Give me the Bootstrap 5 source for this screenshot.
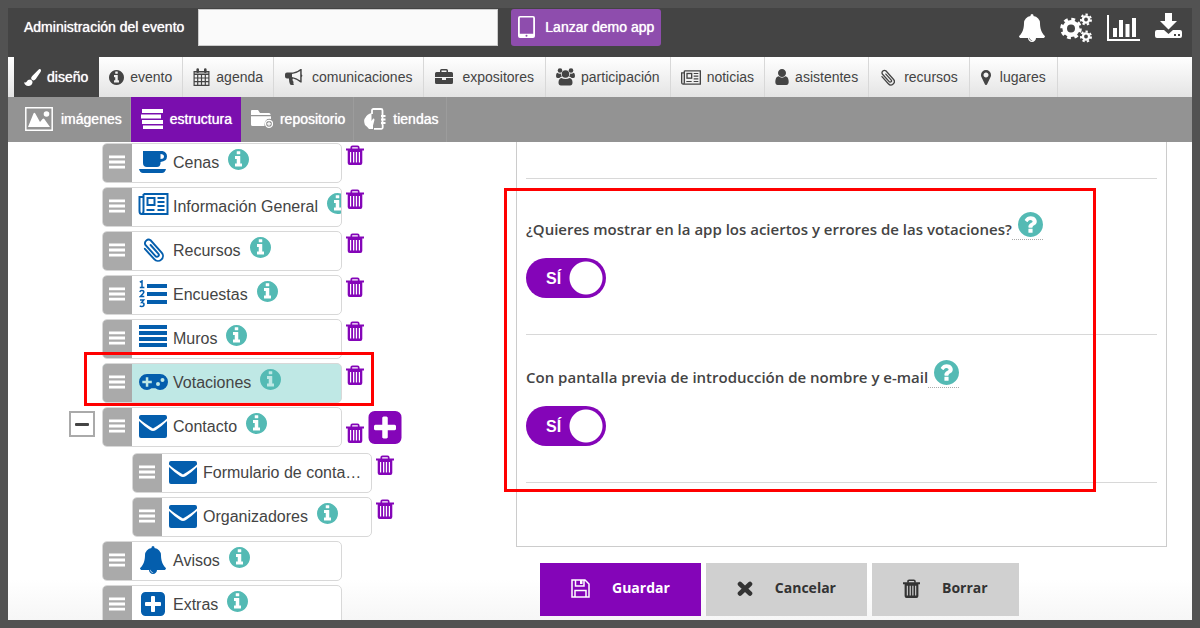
<!DOCTYPE html>
<html lang="es">
<head>
<meta charset="utf-8">
<meta name="viewport" content="width=device-width, initial-scale=1">
<title>Administración del evento</title>
<link href="https://cdn.jsdelivr.net/npm/bootstrap@5.3.0/dist/css/bootstrap.min.css" rel="stylesheet">
<style>
  :root { --dark: #444; --purple: #8405b8; --teal: #54bab4; --blue: #045ead; --grip: #aaa; }
  body { background: #525252; font-family: "Liberation Sans", Arial, sans-serif; font-size: 14px; line-height: 20px; color: var(--dark); }
  svg { display: block; flex: none; }
  a { color: inherit; text-decoration: none; }
  .app-shell { height: 100vh; padding: 8px; }
  .soft-bold { text-shadow: 0 0 1px currentColor; }

  .top-bar { background: var(--dark); color: #fff; height: 49px; padding: 1px 10px 0 16px; }
  .event-name { width: 300px; height: 37px; border: 1px solid #ccc; border-radius: 0; background: #fafafa; margin: 0 13px 0 14px; }
  .btn-demo { background: #8e4dad; color: #fff; height: 37px; border-radius: 3px; padding: 0 7px 2px; gap: 10px; font-size: 14px; line-height: 20px; border: 0; }
  .btn-demo:hover { background: #7c3e9a; color: #fff; }
  .top-tools { gap: 15px; }

  .main-tabs { height: 40px; padding-left: 6px; background: linear-gradient(#fff, #e4e4e4); }
  .main-tabs a { height: 40px; padding: 0 10px; gap: 6px; border-right: 1px solid #d8d8d8; }
  .main-tabs a.active { background: var(--dark); color: #fff; border-color: var(--dark); }
  .main-tabs .roomy { gap: 9px; padding: 0 11px; }

  .sub-tabs { height: 45px; padding-left: 6px; background: #939393; color: #fff; }
  .sub-tabs a { height: 45px; padding: 0 8px 2px 10px; gap: 7px; border-right: 1px solid #9c9c9c; }
  .sub-tabs a.active { background: #7a0eae; border-color: #7a0eae; }

  .workspace { background: linear-gradient(#fff, #fff calc(100% - 40px), #f6f6f6); }
  .structure { flex: 0 0 508px; padding: 1px 0 0 61px; }
  .entry { gap: 4px; margin-bottom: 4px; }
  .entry.parent { margin-bottom: 6px; }
  .fold-col { width: 29px; padding-top: 4px; }
  .child .fold-col { width: 59px; }
  .btn-fold { width: 26px; height: 26px; border: 2px solid var(--grip); background: #fff; padding: 0; color: #444; }
  .entry-box { width: 240px; height: 40px; border: 1px solid #d8d8d8; border-radius: 5px; background: #fff; font-size: 16px; }
  .entry-box.selected { background: #bfe8e5; }
  .grip { width: 29px; padding: 0 1px 2px 0; background: var(--grip); color: #fff; }
  .entry-icon { width: 28px; margin: 0 6px 2px 7px; color: var(--blue); }
  .entry-info { color: var(--teal); margin: 0 0 7px 9px; }
  .btn-flat { border: 0; background: none; padding: 0; color: var(--purple); }
  .entry > .btn-trash { margin-top: 2px; }
  .parent > .btn-trash { margin-top: 16px; }
  .parent > .btn-add { margin-top: 4px; }
  .callout-frame { position: absolute; border: 3px solid #f00; pointer-events: none; }
  .entry .callout-frame { left: 15px; top: -11px; width: 290px; height: 54px; }

  .editor { padding-right: 25px; font-family: "Open Sans", "Noto Sans", sans-serif; }
  .option-panel { border: 1px solid #ccc; border-top: 0; padding: 0 9px 63px; }
  .panel-head { height: 37px; border-bottom: 1px solid #d8d8d8; }
  .option { border-bottom: 1px solid #d8d8d8; padding: 25px 0 36px; }
  .option.first { padding-top: 33px; }
  .option-label { font-size: 15px; font-weight: 600; line-height: 20px; padding-top: 7px; }
  .option-help { border-bottom: 1px dotted #aaa; color: var(--teal); padding: 0 0 1px 6px; }
  .option-title { height: 28px; margin-bottom: 18px; }
  .switch-wrap { position: relative; width: 80px; height: 40px; }
  .switch-wrap input { appearance: none; width: 80px; height: 40px; margin: 0; display: block; border-radius: 20px; background: radial-gradient(circle at 20px 20px, #fff 16px, #aaa 17px); }
  .switch-wrap input:checked { background: radial-gradient(circle at 60px 20px, #fff 16px, var(--purple) 17px); }
  .switch-wrap span { position: absolute; left: 20px; top: 11px; color: #fff; font: bold 16px/20px "Liberation Sans", Arial, sans-serif; pointer-events: none; }
  .editor .callout-frame { left: -22px; right: 61px; top: 9px; bottom: -9px; }
  .form-actions { gap: 5px; padding: 16px 0 0 24px; }
  .btn-action { height: 53px; padding: 0 31px 3px; gap: 22px; border: 0; background: #d0d0d0; color: #333; font-weight: 700; font-size: 14px; }
  .btn-action.save { background: var(--purple); color: #fff; }
</style>
</head>
<body>
<svg width="0" height="0" class="position-absolute" aria-hidden="true">
  <symbol id="info" viewBox="128 128 1536 1536"><path fill="currentColor" d="M1152 1376v-160q0-14-9-23t-23-9h-96v-512q0-14-9-23t-23-9h-320q-14 0-23 9t-9 23v160q0 14 9 23t23 9h96v320h-96q-14 0-23 9t-9 23v160q0 14 9 23t23 9h448q14 0 23-9t9-23zm-128-896v-160q0-14-9-23t-23-9h-192q-14 0-23 9t-9 23v160q0 14 9 23t23 9h192q14 0 23-9t9-23zm640 416q0 209-103 385.500t-279.500 279.500-385.500 103-385.500-103-279.500-279.500-103-385.500 103-385.500 279.500-279.500 385.500-103 385.500 103 279.500 279.500 103 385.500z"/></symbol>
  <symbol id="help" viewBox="128 128 1536 1536"><path fill="currentColor" d="M1024 1376v-192q0-14-9-23t-23-9h-192q-14 0-23 9t-9 23v192q0 14 9 23t23 9h192q14 0 23-9t9-23zm256-672q0-88-55.500-163t-138.500-116-170-41q-243 0-371 213-15 24 8 42l132 100q7 6 19 6 16 0 25-12 53-68 86-92 34-24 86-24 48 0 85.500 26t37.500 59q0 38-20 61t-68 45q-63 28-115.500 86.500t-52.500 125.500v36q0 14 9 23t23 9h192q14 0 23-9t9-23q0-19 21.500-49.500t54.500-49.500q32-18 49-28.500t46-35 44.500-48 28-60.500 12.500-81zm384 192q0 209-103 385.500t-279.500 279.500-385.500 103-385.500-103-279.500-279.500-103-385.500 103-385.500 279.500-279.500 385.500-103 385.500 103 279.500 279.500 103 385.500z"/></symbol>
  <symbol id="bell" viewBox="64 0 1664 1792"><path fill="currentColor" d="M912 1696q0-16-16-16-59 0-101.500-42.500t-42.500-101.500q0-16-16-16t-16 16q0 73 51.500 124.500t124.500 51.500q16 0 16-16zm816-288q0 52-38 90t-90 38h-448q0 106-75 181t-181 75-181-75-75-181h-448q-52 0-90-38t-38-90q50-42 91-88t85-119.500 74.500-158.500 50-206 19.500-260q0-152 117-282.500t307-158.500q-8-19-8-39 0-40 28-68t68-28 68 28 28 68q0 20-8 39 190 28 307 158.500t117 282.500q0 139 19.500 260t50 206 74.500 158.500 85 119.500 91 88z"/></symbol>
  <symbol id="user" viewBox="256 128 1280 1536"><path fill="currentColor" d="M1536 1399q0 109-62.500 187t-150.500 78h-854q-88 0-150.500-78t-62.500-187q0-85 8.500-160.500t31.500-152 58.500-131 94-89 134.500-34.500q131 128 313 128t313-128q76 0 134.500 34.500t94 89 58.500 131 31.500 152 8.500 160.500zm-256-887q0 159-112.500 271.500t-271.500 112.500-271.500-112.500-112.500-271.500 112.500-271.500 271.500-112.500 271.500 112.500 112.500 271.500z"/></symbol>
  <symbol id="pin" viewBox="384 128 1024 1536"><path fill="currentColor" d="M1152 640q0-106-75-181t-181-75-181 75-75 181 75 181 181 75 181-75 75-181zm256 0q0 109-33 179l-364 774q-16 33-47.500 52t-67.500 19-67.500-19-46.500-52l-365-774q-33-70-33-179 0-212 150-362t362-150 362 150 150 362z"/></symbol>
  <symbol id="plus" viewBox="128 128 1536 1536"><path fill="currentColor" d="M1408 960v-128q0-26-19-45t-45-19h-320v-320q0-26-19-45t-45-19h-128q-26 0-45 19t-19 45v320h-320q-26 0-45 19t-19 45v128q0 26 19 45t45 19h320v320q0 26 19 45t45 19h128q26 0 45-19t19-45v-320h320q26 0 45-19t19-45zm256-544v960q0 119-84.500 203.500t-203.500 84.500h-960q-119 0-203.500-84.500t-84.500-203.500v-960q0-119 84.500-203.500t203.500-84.500h960q119 0 203.500 84.500t84.500 203.500z"/></symbol>
  <symbol id="trash" viewBox="0 0 18 20"><path fill="none" stroke="currentColor" stroke-width="1.700" d="M5.300 4V2.500q0-1.200 1.200-1.200h5q1.200 0 1.200 1.200V4"/><path fill="currentColor" fill-rule="evenodd" d="M0 3.500h18v2h-1.700V18q0 2-2 2H3.700q-2 0-2-2V5.500H0zM4 7v10.500h1.200V7zM7 7v10.500h1.300V7zM9.800 7v10.500h1.300V7zM12.800 7v10.500H14V7z"/></symbol>
  <symbol id="bars" viewBox="0 0 17 14"><path fill="currentColor" d="M0 0h17v3H0zM0 5.500h17v3H0zM0 11h17v3H0z"/></symbol>
  <symbol id="news" viewBox="0 0 30 22"><g fill="none" stroke="currentColor"><path stroke-width="2" d="M5 1h24v20H4M5 1v17q0 3-2 3-2 0-2-3V4h4"/><rect x="9" y="5" width="7" height="7" stroke-width="2"/><path stroke-width="1.800" d="M19 5h7M19 9h7M19 13h7M8 17h8M19 17h7"/></g></symbol>
  <symbol id="clip" viewBox="0 0 22 24"><path fill="none" stroke="currentColor" stroke-width="1.900" stroke-linecap="round" transform="rotate(-42 12 12) translate(-1 0)" d="M7 5V19a5 5 0 0010 0V2.500a3.600 3.500 0 00-7 0V17.500a1.900 2 0 003.800 0V6"/></symbol>
  <symbol id="mail" viewBox="0 0 28 23"><path fill="currentColor" d="M2 0h24q2 0 2 2v1.500Q24 7.500 14 13.500 4 7.500 0 3.500V2Q0 0 2 0zM0 6q5 5 11 9 3 1.800 6 0 6-4 11-9v15q0 2-2 2H2q-2 0-2-2z"/></symbol>
</svg>

<div class="app-shell d-flex flex-column">
  <header class="top-bar d-flex align-items-start flex-shrink-0">
    <label class="soft-bold text-nowrap pt-2 mt-0" for="eventName">Administración del evento</label>
    <input class="event-name form-control" id="eventName" type="text">
    <button class="btn btn-demo d-flex align-items-center text-nowrap" type="button">
      <svg width="17" height="22" viewBox="0 0 17 22"><path fill="currentColor" fill-rule="evenodd" d="M2 0h13q2 0 2 2v18q0 2-2 2H2q-2 0-2-2V2Q0 0 2 0zm-.2 2v15.800h13.400V2q0-.5-.5-.5H2.300q-.5 0-.5.500zM8.500 18.800a1 1 0 100 2 1 1 0 000-2z"/></svg>
      <span class="soft-bold">Lanzar demo app</span>
    </button>
    <nav class="top-tools d-flex align-items-center ms-auto pt-1" aria-label="Herramientas">
      <a href="#" aria-label="Avisos"><svg width="26" height="30"><use href="#bell"/></svg></a>
      <a href="#" aria-label="Ajustes"><svg width="32" height="30" viewBox="0 0 32 30"><g fill="none" stroke="currentColor"><circle cx="11" cy="15.500" r="6.300" stroke-width="4.600"/><circle cx="11" cy="15.500" r="9.300" stroke-width="3" stroke-dasharray="3.800 3.504"/><circle cx="26" cy="6.500" r="3.100" stroke-width="2.400"/><circle cx="26" cy="6.500" r="5" stroke-width="2" stroke-dasharray="2.300 2.188"/><circle cx="26" cy="23.500" r="3.100" stroke-width="2.400"/><circle cx="26" cy="23.500" r="5" stroke-width="2" stroke-dasharray="2.300 2.188"/></g></svg></a>
      <a href="#" aria-label="Estadísticas"><svg width="33" height="26" viewBox="0 0 33 26"><path fill="currentColor" d="M0 0h2v24h31v2H0zM6 13h4v9H6zM12 5h4v17h-4zM18.500 9h4v13h-4zM25 3h4v19h-4z"/></svg></a>
      <a href="#" class="pb-1" aria-label="Descargar"><svg width="27" height="26" viewBox="0 0 27 26"><path fill="currentColor" fill-rule="evenodd" d="M10 0h7v8h5l-8.500 8.500L5 8h5zM2 17h7l4.500 4 4.500-4h7q2 0 2 2v4q0 2-2 2H2q-2 0-2-2v-4q0-2 2-2zm17 4v2h2v-2zm4 0v2h2v-2z"/></svg></a>
    </nav>
  </header>

  <nav class="main-tabs d-flex flex-shrink-0 text-nowrap" aria-label="Secciones">
    <a href="#" class="active d-flex align-items-center soft-bold" aria-current="page"><svg width="17" height="17" viewBox="0 0 17 17"><path fill="currentColor" d="M16.500.3q1 .8 0 2.700l-4.700 7q-1.500 1.900-3 1.300-2-1-1.600-2.600.2-.9 1.500-2.300l5.500-5.500q1.300-1.300 2.300-.6zM6.300 10.500q2 .7 2.300 2.500-.5 3.800-4.300 4-3.300 0-4.300-3.800 1.700 1 2.600-.4.900-2.300 3.700-2.300z"/></svg>diseño</a>
    <a href="#" class="d-flex align-items-center"><svg width="15" height="15"><use href="#info"/></svg>evento</a>
    <a href="#" class="d-flex align-items-center"><svg width="17" height="18" viewBox="0 0 16 18"><path fill="none" stroke="currentColor" stroke-width="1.200" d="M.6 3.500h14.800v13.900H.6zM.6 6.500h14.800M.6 10h14.800M.6 13.700h14.800M4.200 6.500v11M8 6.500v11M11.800 6.500v11M.6 5h14.800"/><path stroke="currentColor" stroke-width="2.600" stroke-linecap="round" d="M4.200 1.600v2.200M11.800 1.600v2.200"/></svg>agenda</a>
    <a href="#" class="roomy d-flex align-items-center"><svg width="18" height="16" viewBox="0 0 18 16"><path fill="currentColor" fill-rule="evenodd" d="M2 3.500h6q4-.5 7.500-3.500h1.200v5.500q1.300.7 0 2.500v5.500h-1.200Q12 10.500 8 9.500q-1.200 1.500.6 3.500-.6 1.800.5 2.800-2 .6-4-.2Q3.800 12 4 9.500H2Q0 9.500 0 7.500v-2q0-2 2-2zm5 1.600V8q4.500.5 8.200 3.500V2Q11.500 4.500 7 5.100z"/></svg>comunicaciones</a>
    <a href="#" class="roomy d-flex align-items-center"><svg width="18" height="16" viewBox="0 0 18 16"><path fill="currentColor" fill-rule="evenodd" d="M5 3V1.500Q5 0 6.500 0h5Q13 0 13 1.500V3h3.500Q18 3 18 4.500V8H0V4.500Q0 3 1.500 3zm1.500 0h5V1.500h-5zM0 9h7v2h4V9h7v4.500q0 1.500-1.500 1.500h-15Q0 15 0 13.500z"/></svg>expositores</a>
    <a href="#" class="d-flex align-items-center"><svg width="19" height="18" viewBox="0 0 19 18"><g fill="currentColor"><circle cx="9.500" cy="6" r="3.800"/><circle cx="4" cy="2.500" r="2.300"/><circle cx="15" cy="2.500" r="2.300"/><path d="M5.500 10Q7 11 9.500 11T13.500 10q3 .5 3 4.500 0 3-2.500 3H5q-2.500 0-2.500-3 0-4 3-4.500zM1.300 4.800q1.700 1.200 3.400.8.200 2 1.300 3-1.500.2-2.700 1.400H1.500Q0 10 0 8q0-3 1.300-3.200zM17.700 4.800q-1.700 1.200-3.400.8-.2 2-1.300 3 1.500.2 2.700 1.400h1.800Q19 10 19 8q0-3-1.300-3.200z"/></g></svg>participación</a>
    <a href="#" class="d-flex align-items-center"><svg width="20" height="15"><use href="#news"/></svg>noticias</a>
    <a href="#" class="d-flex align-items-center"><svg width="14" height="16"><use href="#user"/></svg>asistentes</a>
    <a href="#" class="roomy d-flex align-items-center"><svg width="15" height="17"><use href="#clip"/></svg>recursos</a>
    <a href="#" class="roomy d-flex align-items-center"><svg width="10" height="15"><use href="#pin"/></svg>lugares</a>
  </nav>

  <nav class="sub-tabs d-flex flex-shrink-0 text-nowrap soft-bold" aria-label="Diseño">
    <a href="#" class="d-flex align-items-center"><svg width="30" height="24" viewBox="0 0 30 24"><path fill="none" stroke="currentColor" stroke-width="1.500" d="M1.800.8h26.400v22.400H1.800z"/><path fill="currentColor" d="M4 20 9.500 6.500q.8-1.300 1.800 0L16 15l2.500-3q1-1 1.800 0L26 20z"/><circle cx="22.500" cy="7" r="2.800" fill="currentColor"/></svg>imágenes</a>
    <a href="#" class="active d-flex align-items-center" aria-current="page"><svg width="22" height="20" viewBox="0 0 22 20"><path fill="currentColor" d="M1 0h21v4H1zM0 5.500h20v4H0zM1 11h21v4H1zM2 16.500h20V20H2z"/></svg>estructura</a>
    <a href="#" class="d-flex align-items-center"><svg width="22" height="18" viewBox="0 0 22 18"><path fill="currentColor" d="M1 0h6l2 3h9q1.500 0 1.500 1.500V5H0V1Q0 0 1 0zM0 6.300h20V9q-6-1-6.500 5.500V16H1.500Q0 16 0 14.500z"/><circle cx="18" cy="13.800" r="3.500" fill="none" stroke="currentColor" stroke-width="1.300"/><path stroke="currentColor" stroke-width="1.200" d="M16 13.800h4M18 11.800v4"/></svg>repositorio</a>
    <a href="#" class="d-flex align-items-center"><svg width="22" height="22" viewBox="0 0 22 22"><path fill="none" stroke="currentColor" stroke-width="1.800" d="M8 6V2.500Q8 1 9.500 1H17q1.500 0 1.500 1.500V17M10 20.800h7.500q1.200 0 1.200-1.200V17"/><path fill="currentColor" d="M7.500 5v8l1.700-2.500q1.500 0 1.200 1.800L9 17.500V21H5Q3 18.500 1 17-1 11.500 1.500 9.500 3 6 7.500 5zM17 7h4.500v2H17zM17 10.500h4.500v2H17zM17 14h4.500v2H17z"/></svg>tiendas</a>
  </nav>

  <main class="workspace d-flex flex-fill overflow-hidden">
    <section class="structure" aria-label="Estructura">
      <div class="entry d-flex align-items-start"><div class="fold-col"></div>
        <div class="entry-box d-flex overflow-hidden"><span class="grip d-flex align-items-center justify-content-center"><svg width="16" height="14"><use href="#bars"/></svg></span><span class="d-flex align-items-center flex-fill text-nowrap"><span class="entry-icon d-flex justify-content-center"><svg width="28" height="22" viewBox="0 0 28 22"><path fill="currentColor" fill-rule="evenodd" d="M4 0h19.500q4.500 1 4.500 5.500T21.500 11v1.500Q21 16 18 16H8q-4 0-4-4zm17.500 3v5q3.500 0 3.500-2.500T21.500 3zM0 18h27q-1 4-4 4H4q-3 0-4-4z"/></svg></span>Cenas<svg class="entry-info" width="21" height="21"><use href="#info"/></svg></span></div>
        <button class="btn-flat btn-trash" type="button" aria-label="Borrar Cenas"><svg width="18" height="20"><use href="#trash"/></svg></button></div>

      <div class="entry d-flex align-items-start"><div class="fold-col"></div>
        <div class="entry-box d-flex overflow-hidden"><span class="grip d-flex align-items-center justify-content-center flex-shrink-0"><svg width="16" height="14"><use href="#bars"/></svg></span><span class="d-flex align-items-center flex-fill text-nowrap"><span class="entry-icon d-flex justify-content-center flex-shrink-0 pb-1"><svg width="31" height="22"><use href="#news"/></svg></span>Información General<svg class="entry-info" width="21" height="21"><use href="#info"/></svg></span></div>
        <button class="btn-flat btn-trash" type="button" aria-label="Borrar Información General"><svg width="18" height="20"><use href="#trash"/></svg></button></div>

      <div class="entry d-flex align-items-start"><div class="fold-col"></div>
        <div class="entry-box d-flex overflow-hidden"><span class="grip d-flex align-items-center justify-content-center"><svg width="16" height="14"><use href="#bars"/></svg></span><span class="d-flex align-items-center flex-fill text-nowrap"><span class="entry-icon d-flex justify-content-center"><svg width="22" height="24"><use href="#clip"/></svg></span>Recursos<svg class="entry-info" width="21" height="21"><use href="#info"/></svg></span></div>
        <button class="btn-flat btn-trash" type="button" aria-label="Borrar Recursos"><svg width="18" height="20"><use href="#trash"/></svg></button></div>

      <div class="entry d-flex align-items-start"><div class="fold-col"></div>
        <div class="entry-box d-flex overflow-hidden"><span class="grip d-flex align-items-center justify-content-center"><svg width="16" height="14"><use href="#bars"/></svg></span><span class="d-flex align-items-center flex-fill text-nowrap"><span class="entry-icon d-flex justify-content-center"><svg width="28" height="28" viewBox="0 0 28 28"><path fill="currentColor" d="M8 4h20v4H8zM8 12h20v4H8zM8 20h20v4H8z"/><path fill="none" stroke="currentColor" stroke-width="1.500" d="M.8 2.200 3 1v7M.8 7.500h4.600M.8 12q.5-1.500 2-1.500 2 0 2 1.500 0 1.200-3.500 4.500h4M1 20h3.700l-2 2.500q2.300 0 2.300 2T2.800 26.500q-1.300 0-2-.8"/></svg></span>Encuestas<svg class="entry-info" width="21" height="21"><use href="#info"/></svg></span></div>
        <button class="btn-flat btn-trash" type="button" aria-label="Borrar Encuestas"><svg width="18" height="20"><use href="#trash"/></svg></button></div>

      <div class="entry d-flex align-items-start"><div class="fold-col"></div>
        <div class="entry-box d-flex overflow-hidden"><span class="grip d-flex align-items-center justify-content-center"><svg width="16" height="14"><use href="#bars"/></svg></span><span class="d-flex align-items-center flex-fill text-nowrap"><span class="entry-icon d-flex justify-content-center pb-1"><svg width="28" height="22" viewBox="0 0 28 22"><path fill="currentColor" d="M0 0h28v4H0zM0 6h28v4H0zM0 12h28v4H0zM0 18h28v4H0z"/></svg></span>Muros<svg class="entry-info" width="21" height="21"><use href="#info"/></svg></span></div>
        <button class="btn-flat btn-trash" type="button" aria-label="Borrar Muros"><svg width="18" height="20"><use href="#trash"/></svg></button></div>

      <div class="entry d-flex align-items-start position-relative"><div class="fold-col"></div>
        <div class="entry-box selected d-flex overflow-hidden"><span class="grip d-flex align-items-center justify-content-center"><svg width="16" height="14"><use href="#bars"/></svg></span><span class="d-flex align-items-center flex-fill text-nowrap"><span class="entry-icon d-flex justify-content-center"><svg width="29" height="16" viewBox="0 0 29 16"><path fill="currentColor" fill-rule="evenodd" d="M8 0h13a8 8 0 010 16q-2.500 0-4.500-1.800h-4Q10.500 16 8 16A8 8 0 018 0zM6.800 3.300v3.500H3.300v2.500h3.500v3.500h2.500V9.300h3.500V6.800H9.300V3.300zM19 8a2 2 0 100 4 2 2 0 000-4zm4.500-4a2 2 0 100 4 2 2 0 000-4z"/></svg></span>Votaciones<svg class="entry-info" width="21" height="21"><use href="#info"/></svg></span></div>
        <button class="btn-flat btn-trash" type="button" aria-label="Borrar Votaciones"><svg width="18" height="20"><use href="#trash"/></svg></button>
        <div class="callout-frame"></div></div>

      <div class="entry parent d-flex align-items-start"><div class="fold-col"><button class="btn-fold d-flex align-items-center justify-content-center" type="button" aria-label="Plegar Contacto"><svg width="14" height="3" viewBox="0 0 14 3"><rect width="14" height="3" rx="1" fill="currentColor"/></svg></button></div>
        <div class="entry-box d-flex overflow-hidden"><span class="grip d-flex align-items-center justify-content-center"><svg width="16" height="14"><use href="#bars"/></svg></span><span class="d-flex align-items-center flex-fill text-nowrap"><span class="entry-icon d-flex justify-content-center"><svg width="28" height="23"><use href="#mail"/></svg></span>Contacto<svg class="entry-info" width="21" height="21"><use href="#info"/></svg></span></div>
        <button class="btn-flat btn-trash" type="button" aria-label="Borrar Contacto"><svg width="18" height="20"><use href="#trash"/></svg></button>
        <button class="btn-flat btn-add" type="button" aria-label="Añadir"><svg width="34" height="33"><use href="#plus"/></svg></button></div>

      <div class="entry child d-flex align-items-start"><div class="fold-col"></div>
        <div class="entry-box d-flex overflow-hidden"><span class="grip d-flex align-items-center justify-content-center"><svg width="16" height="14"><use href="#bars"/></svg></span><span class="d-flex align-items-center flex-fill text-nowrap"><span class="entry-icon d-flex justify-content-center"><svg width="28" height="23"><use href="#mail"/></svg></span>Formulario de conta…</span></div>
        <button class="btn-flat btn-trash" type="button" aria-label="Borrar Formulario"><svg width="18" height="20"><use href="#trash"/></svg></button></div>

      <div class="entry child d-flex align-items-start"><div class="fold-col"></div>
        <div class="entry-box d-flex overflow-hidden"><span class="grip d-flex align-items-center justify-content-center"><svg width="16" height="14"><use href="#bars"/></svg></span><span class="d-flex align-items-center flex-fill text-nowrap"><span class="entry-icon d-flex justify-content-center"><svg width="28" height="23"><use href="#mail"/></svg></span>Organizadores<svg class="entry-info" width="21" height="21"><use href="#info"/></svg></span></div>
        <button class="btn-flat btn-trash" type="button" aria-label="Borrar Organizadores"><svg width="18" height="20"><use href="#trash"/></svg></button></div>

      <div class="entry d-flex align-items-start"><div class="fold-col"></div>
        <div class="entry-box d-flex overflow-hidden"><span class="grip d-flex align-items-center justify-content-center"><svg width="16" height="14"><use href="#bars"/></svg></span><span class="d-flex align-items-center flex-fill text-nowrap"><span class="entry-icon d-flex justify-content-center"><svg width="26" height="28"><use href="#bell"/></svg></span>Avisos<svg class="entry-info" width="21" height="21"><use href="#info"/></svg></span></div></div>

      <div class="entry d-flex align-items-start"><div class="fold-col"></div>
        <div class="entry-box d-flex overflow-hidden"><span class="grip d-flex align-items-center justify-content-center"><svg width="16" height="14"><use href="#bars"/></svg></span><span class="d-flex align-items-center flex-fill text-nowrap"><span class="entry-icon d-flex justify-content-center"><svg width="24" height="24"><use href="#plus"/></svg></span>Extras<svg class="entry-info" width="21" height="21"><use href="#info"/></svg></span></div></div>
    </section>

    <form class="editor flex-fill">
      <div class="option-panel">
        <div class="panel-head"></div>
        <div class="position-relative">
          <div class="option first">
            <div class="option-title d-flex">
              <label class="option-label text-nowrap" for="showHits">¿Quieres mostrar en la app los aciertos y errores de las votaciones?</label>
              <a href="#" class="option-help" aria-label="Ayuda"><svg width="25" height="25"><use href="#help"/></svg></a>
            </div>
            <div class="switch-wrap"><input type="checkbox" role="switch" id="showHits" checked><span>SÍ</span></div>
          </div>
          <div class="option">
            <div class="option-title d-flex">
              <label class="option-label text-nowrap" for="preScreen">Con pantalla previa de introducción de nombre y e-mail</label>
              <a href="#" class="option-help" aria-label="Ayuda"><svg width="25" height="25"><use href="#help"/></svg></a>
            </div>
            <div class="switch-wrap"><input type="checkbox" role="switch" id="preScreen" checked><span>SÍ</span></div>
          </div>
          <div class="callout-frame"></div>
        </div>
      </div>
      <div class="form-actions d-flex">
        <button class="btn-action save d-flex align-items-center" type="button"><svg width="19" height="19" viewBox="0 0 19 19"><path fill="none" stroke="currentColor" stroke-width="1.500" d="M1 1h13l4 4v13H1zM4.500 1v6h8.500V1M4 18v-6.500h11V18"/><path fill="currentColor" d="M9 1h2.500v4H9z"/></svg>Guardar</button>
        <button class="btn-action d-flex align-items-center" type="button"><svg width="16" height="15" viewBox="0 0 16 15"><path fill="none" stroke="currentColor" stroke-width="4.600" stroke-linecap="round" d="m3 3 10 9.500M13 3 3 12.500"/></svg>Cancelar</button>
        <button class="btn-action d-flex align-items-center" type="button"><svg width="17" height="19"><use href="#trash"/></svg>Borrar</button>
      </div>
    </form>
  </main>
</div>
<script src="https://cdn.jsdelivr.net/npm/bootstrap@5.3.0/dist/js/bootstrap.bundle.min.js"></script>
</body>
</html>
